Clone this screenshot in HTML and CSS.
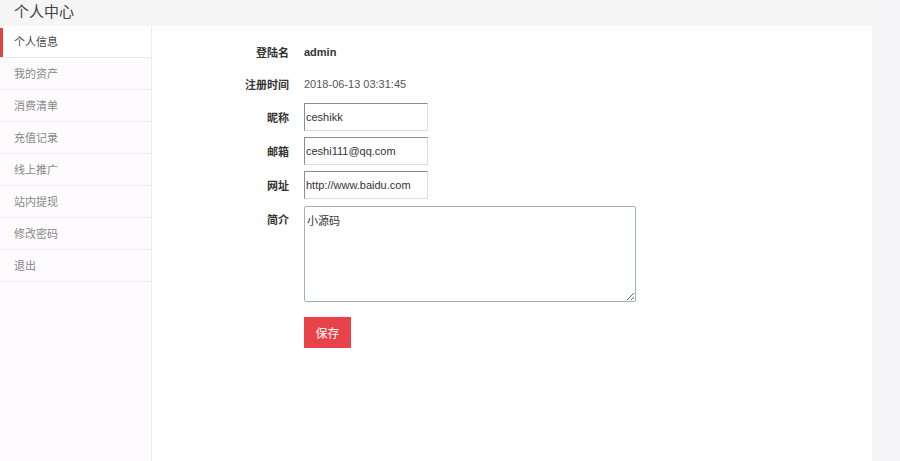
FILE: index.html
```html
<!DOCTYPE html>
<html lang="zh-CN">
<head>
<meta charset="utf-8">
<title>个人中心</title>
<link rel="stylesheet" href="styles.css">
</head>
<body>
<div class="page">
  <header class="top">个人中心</header>
  <div class="body">
    <nav class="side">
      <a class="item active">个人信息</a>
      <a class="item">我的资产</a>
      <a class="item">消费清单</a>
      <a class="item">充值记录</a>
      <a class="item">线上推广</a>
      <a class="item">站内提现</a>
      <a class="item">修改密码</a>
      <a class="item">退出</a>
    </nav>
    <main class="main">
      <form class="form">
        <div class="row">
          <span class="label">登陆名</span>
          <span class="value strong">admin</span>
        </div>
        <div class="row">
          <span class="label">注册时间</span>
          <span class="value">2018-06-13 03:31:45</span>
        </div>
        <div class="row">
          <span class="label">昵称</span>
          <input class="field" type="text" value="ceshikk">
        </div>
        <div class="row">
          <span class="label">邮箱</span>
          <input class="field" type="text" value="ceshi111@qq.com">
        </div>
        <div class="row">
          <span class="label">网址</span>
          <input class="field" type="text" value="http://www.baidu.com">
        </div>
        <div class="row row-top">
          <span class="label label-top">简介</span>
          <textarea class="area">小源码</textarea>
        </div>
        <div class="row row-btn">
          <span class="label"></span>
          <button class="save" type="button">保存</button>
        </div>
      </form>
    </main>
  </div>
</div>
</body>
</html>
```

FILE: styles.css
```css
html, body {
  margin: 0;
  padding: 0;
}
body {
  background: #f5f4f7;
  font-family: "Liberation Sans", "Noto Sans CJK SC", sans-serif;
  color: #333;
  height: 461px;
  overflow: hidden;
}
.page {
  width: 872px;
  height: 461px;
  display: flex;
  flex-direction: column;
}
.top {
  height: 26px;
  line-height: 21px;
  padding-left: 14px;
  font-size: 15px;
  color: #444;
  font-family: "Noto Sans CJK SC", sans-serif;
  background: #f5f5f6;
}
.body {
  flex: 1;
  display: flex;
  background: #ffffff;
}
.side {
  box-sizing: border-box;
  width: 152px;
  background: #fdfbfd;
  border-right: 1px solid #efebef;
  display: flex;
  flex-direction: column;
}
.item {
  height: 31px;
  line-height: 31px;
  padding-left: 14px;
  font-size: 11px;
  color: #888;
  border-bottom: 1px solid #ece9ec;
  font-family: "Noto Sans CJK SC", sans-serif;
  position: relative;
}
.item.active {
  background: #ffffff;
  color: #444;
}
.item.active::before {
  content: "";
  position: absolute;
  left: 0;
  top: 2px;
  width: 3px;
  height: 29px;
  background: #e24545;
}
.main {
  flex: 1;
}
.form {
  margin: 13px 0 0 16px;
  display: flex;
  flex-direction: column;
  gap: 6px;
}
.row {
  display: flex;
  align-items: center;
  min-height: 26px;
}
.row-top {
  align-items: flex-start;
  margin-top: 1px;
}
.row-btn {
  margin-top: 9px;
}
.label {
  width: 121px;
  margin-right: 15px;
  text-align: right;
  font-size: 11px;
  font-weight: bold;
  color: #333;
  font-family: "Noto Sans CJK SC", sans-serif;
}
.label-top {
  padding-top: 5px;
}
.value {
  font-size: 11px;
  color: #555;
}
.value.strong {
  font-weight: bold;
  color: #333;
}
.field {
  box-sizing: border-box;
  width: 124px;
  height: 28px;
  margin: 0;
  padding: 0 1px;
  font-family: "Liberation Sans", sans-serif;
  font-size: 11px;
  color: #333;
  border: 1px solid;
  border-color: #8c8c8c #dcdcdc #dcdcdc #8c8c8c;
  background: #fff;
  outline: none;
}
.area {
  box-sizing: border-box;
  width: 332px;
  height: 96px;
  margin: 0;
  padding: 5px 2px;
  font-family: "Noto Sans CJK SC", sans-serif;
  font-size: 11px;
  color: #333;
  border: 1px solid #a5aebd;
  border-radius: 2px;
  background: #fff;
}
.save {
  width: 47px;
  height: 31px;
  padding: 0;
  border: none;
  background: #e8424a;
  color: #fff;
  font-size: 12px;
  font-family: "Noto Sans CJK SC", sans-serif;
}
```
